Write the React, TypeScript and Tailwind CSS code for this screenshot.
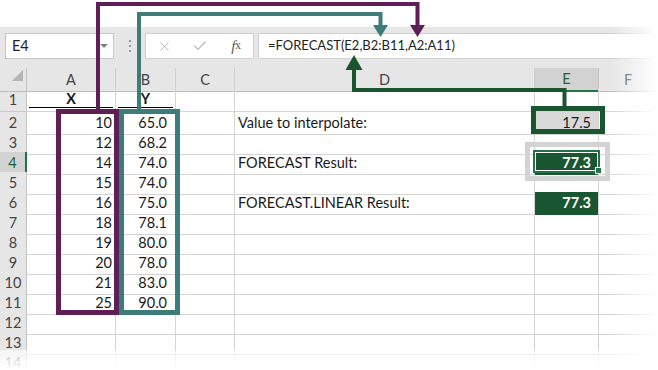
import { X, Check } from "lucide-react";

const colA = ["10", "12", "14", "15", "16", "18", "19", "20", "21", "25"];
const colB = ["65.0", "68.2", "74.0", "74.0", "75.0", "78.1", "80.0", "78.0", "83.0", "90.0"];

const labels: Record<number, string> = {
  2: "Value to interpolate:",
  4: "FORECAST Result:",
  6: "FORECAST.LINEAR Result:",
};

const gridCols = "grid grid-cols-[27px_89px_60px_59px_300px_64px_1fr]";

function Cell({ children, className = "" }: { children?: React.ReactNode; className?: string }) {
  return (
    <div className={`h-full border-r border-b border-[#d4d4d4] flex items-center overflow-hidden whitespace-nowrap ${className}`}>
      {children}
    </div>
  );
}

function RowHead({ n, active }: { n: number; active?: boolean }) {
  return (
    <div
      className={`h-full border-b flex items-center justify-center ${
        active
          ? "bg-[#d2d2d2] border-b-[#bcbcbc] border-r-2 border-r-[#217346] text-[#1e5e3a]"
          : "bg-[#e6e6e6] border-b-[#cacaca] border-r border-r-[#c4c4c4] text-[#444]"
      }`}
    >
      {n}
    </div>
  );
}

function ColHead({ label, active }: { label: string; active?: boolean }) {
  return (
    <div
      className={`h-full flex items-center justify-center border-r ${
        active
          ? "bg-[#d2d2d2] border-r-[#c4c4c4] border-b-2 border-b-[#217346] text-[#1e5e3a]"
          : "bg-[#e6e6e6] border-r-[#cfcfcf] border-b border-b-[#bdbdbd] text-[#444]"
      }`}
    >
      {label}
    </div>
  );
}

export default function App() {
  const rows = Array.from({ length: 13 }, (_, i) => i + 2);

  return (
    <div className="relative w-[658px] h-[370px] overflow-hidden bg-white font-['Lato','Liberation_Sans',sans-serif] text-[14.5px] text-[#1a1a1a]">
      {/* Top spacer */}
      <div className="h-[27px]" />

      {/* Formula bar */}
      <div className="h-[41px] bg-[#e6e6e6] flex items-start pt-[6px]">
        <div className="ml-[5px] w-[109px] h-[26px] bg-white border border-[#c6c6c6] flex items-center pl-[6px] pr-[5px]">
          <span className="flex-1 text-[#222]">E4</span>
          <span className="w-0 h-0 border-l-[4px] border-r-[4px] border-t-[4px] border-l-transparent border-r-transparent border-t-[#808080]" />
        </div>
        <div className="w-[31px] h-[26px] flex flex-col items-center justify-center gap-[3px]">
          <span className="w-[2px] h-[2px] bg-[#9a9a9a]" />
          <span className="w-[2px] h-[2px] bg-[#9a9a9a]" />
          <span className="w-[2px] h-[2px] bg-[#9a9a9a]" />
        </div>
        <div className="w-[109px] h-[26px] bg-white border border-[#d0d0d0] flex items-center">
          <div className="w-[36px] flex justify-center pl-[1px]">
            <X size={15} strokeWidth={1.4} color="#b5b5b5" />
          </div>
          <div className="w-[38px] flex justify-center">
            <Check size={16} strokeWidth={1.6} color="#b5b5b5" />
          </div>
          <div className="w-[34px] flex justify-center font-['Liberation_Serif',serif] italic text-[#5a5a5a] text-[15px]">
            f<span className="text-[12px] not-italic -ml-[0.5px] translate-y-[1px]">x</span>
          </div>
        </div>
        <div className="ml-[4px] flex-1 h-[26px] bg-white border border-[#d0d0d0] flex items-center pl-[9px] text-[13px] text-[#222]">
          =FORECAST(E2,B2:B11,A2:A11)
        </div>
      </div>

      {/* Column headers */}
      <div className={`${gridCols} h-[20px]`}>
        <div className="h-full bg-[#e6e6e6] border-r border-r-[#c4c4c4] border-b border-b-[#bdbdbd] relative">
          <span className="absolute left-[12px] top-[2px] w-0 h-0 border-b-[11px] border-l-[11px] border-b-[#b4b4b4] border-l-transparent" />
        </div>
        <ColHead label="A" />
        <ColHead label="B" />
        <ColHead label="C" />
        <ColHead label="D" />
        <ColHead label="E" active />
        <ColHead label="F" />
      </div>

      {/* Row 1 */}
      <div className={`${gridCols} h-[24px]`}>
        <RowHead n={1} />
        <Cell className="items-start">
          <div className="mx-[2px] w-full h-[20px] border-b border-black flex items-center justify-center pt-[3px] font-bold">X</div>
        </Cell>
        <Cell className="items-start">
          <div className="mx-[2px] w-full h-[20px] border-b border-black flex items-center justify-center pt-[3px] font-bold">Y</div>
        </Cell>
        <Cell />
        <Cell />
        <Cell />
        <Cell />
      </div>

      {/* Data rows */}
      {rows.map((r) => {
        const a = r <= 11 ? colA[r - 2] : "";
        const b = r <= 11 ? colB[r - 2] : "";
        return (
          <div key={r} className={`${gridCols} h-[20px]`}>
            <RowHead n={r} active={r === 4} />
            <Cell className="justify-end pr-[3px]">{a}</Cell>
            <Cell className="justify-end pr-[8px]">{b}</Cell>
            <Cell />
            <Cell className="pl-[3px]">{labels[r] ?? ""}</Cell>
            {r === 2 ? (
              <Cell className="justify-end pr-[7px] bg-[#d9d9d9]">17.5</Cell>
            ) : r === 4 || r === 6 ? (
              <Cell className="justify-end pr-[7px] bg-[#1b5632] text-white font-bold border-b-[#1b5632]">77.3</Cell>
            ) : (
              <Cell />
            )}
            <Cell />
          </div>
        );
      })}

      {/* Range highlights */}
      <div className="absolute left-[56px] top-[109px] w-[63px] h-[206px] border-[5px] border-[#5e1f57]" />
      <div className="absolute left-[119px] top-[109px] w-[61px] h-[206px] border-[5px] border-[#3e7c7a]" />
      <div className="absolute left-[531px] top-[106px] w-[74px] h-[28px] border-[5px] border-[#1b5530]" />
      <div className="absolute left-[525px] top-[142px] w-[85px] h-[39px] border-[5px] border-[#d3d3d3]" />

      {/* Active cell E4 */}
      <div className="absolute left-[533px] top-[150px] w-[67px] h-[23px] border-2 border-[#217346]">
        <div className="w-full h-full border border-white" />
      </div>
      <div className="absolute left-[595px] top-[167px] w-[7px] h-[7px] bg-[#217346] border border-white" />

      {/* Arrows */}
      <svg className="absolute inset-0 pointer-events-none" width="658" height="370" viewBox="0 0 658 370">
        <path d="M98 110 V4 H417.5 V27" fill="none" stroke="#5e1f57" strokeWidth="4" strokeLinejoin="miter" />
        <polygon points="410,25 425,25 417.5,37" fill="#5e1f57" />
        <path d="M139 110 V14 H380.5 V27" fill="none" stroke="#3e7c7a" strokeWidth="4" strokeLinejoin="miter" />
        <polygon points="373,25 388,25 380.5,37" fill="#3e7c7a" />
        <path d="M564.5 107 V90 H354 V68" fill="none" stroke="#1b5530" strokeWidth="4" strokeLinejoin="miter" />
        <polygon points="345.5,70 362.5,70 354,55" fill="#1b5530" />
      </svg>

      {/* Edge fades */}
      <div className="absolute right-0 top-[27px] w-[48px] h-[343px] bg-linear-to-r from-white/0 to-white" />
      <div className="absolute left-0 bottom-0 w-full h-[20px] bg-linear-to-b from-white/60 to-white" />
    </div>
  );
}
